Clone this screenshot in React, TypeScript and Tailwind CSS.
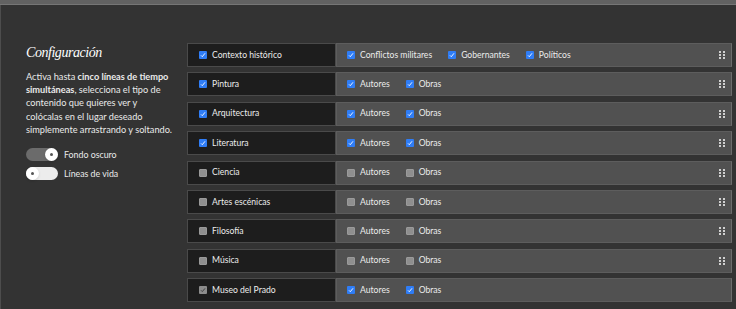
import React from "react";

type Opt = { label: string; on: boolean };
type Row = { label: string; on: boolean; disabled?: boolean; opts: Opt[]; handle: boolean };

const rows: Row[] = [
  { label: "Contexto histórico", on: true, handle: true, opts: [ { label: "Conflictos militares", on: true }, { label: "Gobernantes", on: true }, { label: "Políticos", on: true } ] },
  { label: "Pintura", on: true, handle: true, opts: [ { label: "Autores", on: true }, { label: "Obras", on: true } ] },
  { label: "Arquitectura", on: true, handle: true, opts: [ { label: "Autores", on: true }, { label: "Obras", on: true } ] },
  { label: "Literatura", on: true, handle: true, opts: [ { label: "Autores", on: true }, { label: "Obras", on: true } ] },
  { label: "Ciencia", on: false, handle: true, opts: [ { label: "Autores", on: false }, { label: "Obras", on: false } ] },
  { label: "Artes escénicas", on: false, handle: true, opts: [ { label: "Autores", on: false }, { label: "Obras", on: false } ] },
  { label: "Filosofía", on: false, handle: true, opts: [ { label: "Autores", on: false }, { label: "Obras", on: false } ] },
  { label: "Música", on: false, handle: true, opts: [ { label: "Autores", on: false }, { label: "Obras", on: false } ] },
  { label: "Museo del Prado", on: true, disabled: true, handle: false, opts: [ { label: "Autores", on: true }, { label: "Obras", on: true } ] },
];

function Check({ on, disabled }: { on: boolean; disabled?: boolean }) {
  if (disabled) {
    return (
      <span className="flex h-[8px] w-[8px] shrink-0 items-center justify-center rounded-[1px] bg-[#8d8d8d]">
        <svg viewBox="0 0 8 8" className="h-[8px] w-[8px]"><path d="M2 4.3 L3.3 5.6 L6 2.4" stroke="#3a3a3a" strokeWidth="0.9" fill="none" /></svg>
      </span>
    );
  }
  if (!on) {
    return <span className="block h-[8px] w-[8px] shrink-0 rounded-[1px] bg-[#8f8f8f] border border-[#9a9a9a]" />;
  }
  return (
    <span className="flex h-[8px] w-[8px] shrink-0 items-center justify-center rounded-[1px] bg-[#2f7df6]">
      <svg viewBox="0 0 8 8" className="h-[8px] w-[8px]"><path d="M2 4.4 L3.3 5.7 L6 2.3" stroke="#ffffff" strokeWidth="0.9" fill="none" /></svg>
    </span>
  );
}

function Handle() {
  return (
    <div className="grid grid-cols-2 gap-x-[2px] gap-y-[1px]">
      {[0, 1, 2, 3, 4, 5].map((i) => (
        <span key={i} className="block h-[2px] w-[2px] bg-[#d0d0d0]" />
      ))}
    </div>
  );
}

function Toggle({ on }: { on: boolean }) {
  return on ? (
    <div className="relative h-[13px] w-[32px] rounded-full bg-[#6b6b6b]">
      <div className="absolute right-0 top-0 flex h-[13px] w-[13px] items-center justify-center rounded-full bg-white shadow">
        <span className="block h-[3px] w-[3px] rounded-full bg-[#555]" />
      </div>
    </div>
  ) : (
    <div className="relative h-[13px] w-[32px] rounded-full bg-[#ececec]">
      <div className="absolute left-0 top-0 flex h-[13px] w-[13px] items-center justify-center rounded-full bg-white shadow">
        <span className="block h-[3px] w-[3px] rounded-full bg-[#555]" />
      </div>
    </div>
  );
}

export default function App() {
  return (
    <div className="h-[309px] w-[736px] overflow-hidden bg-[#626262] font-['Lato',sans-serif]">
      <div className="h-[5px] border-b border-[#767676]" />
      <div className="flex h-[304px] border-l border-[#4d4d4d] bg-[#333333]">
        <div className="w-[186px] shrink-0 pl-[25px] pr-[6px] pt-[39px] text-[#eaeaea]">
          <div className="font-['Liberation_Serif',serif] text-[14px] italic leading-[18px] tracking-[-0.45px] text-white">Configuración</div>
          <p className="mt-[8px] text-[9.2px] leading-[13.2px]">
            Activa hasta <b>cinco líneas de tiempo</b>
            <br />
            <b>simultáneas</b>, selecciona el tipo de
            <br />
            contenido que quieres ver y
            <br />
            colócalas en el lugar deseado
            <br />
            simplemente arrastrando y soltando.
          </p>
          <div className="mt-[12px] flex items-center gap-[6px]">
            <Toggle on={true} />
            <span className="text-[8.8px]">Fondo oscuro</span>
          </div>
          <div className="mt-[6px] flex items-center gap-[6px]">
            <Toggle on={false} />
            <span className="text-[8.8px]">Líneas de vida</span>
          </div>
        </div>
        <div className="flex flex-1 flex-col gap-[5.4px] pr-[4px] pt-[38px]">
          {rows.map((r) => (
            <div key={r.label} className="flex h-[24px] text-[8.6px] text-[#ececec]">
              <div className="flex w-[149px] shrink-0 items-center gap-[5px] border border-[#4a4a4a] bg-[#1d1d1d] pl-[11px]">
                <Check on={r.on} disabled={r.disabled} />
                <span>{r.label}</span>
              </div>
              <div className="flex flex-1 items-center border border-[#5d5d5d] border-r-[#6c6c6c] bg-[#515151] pl-[10px] pr-[6px]">
                <div className="flex flex-1 items-center gap-[16px]">
                  {r.opts.map((o) => (
                    <div key={o.label} className="flex items-center gap-[5px]">
                      <Check on={o.on} />
                      <span>{o.label}</span>
                    </div>
                  ))}
                </div>
                {r.handle && <Handle />}
              </div>
            </div>
          ))}
        </div>
      </div>
    </div>
  );
}
